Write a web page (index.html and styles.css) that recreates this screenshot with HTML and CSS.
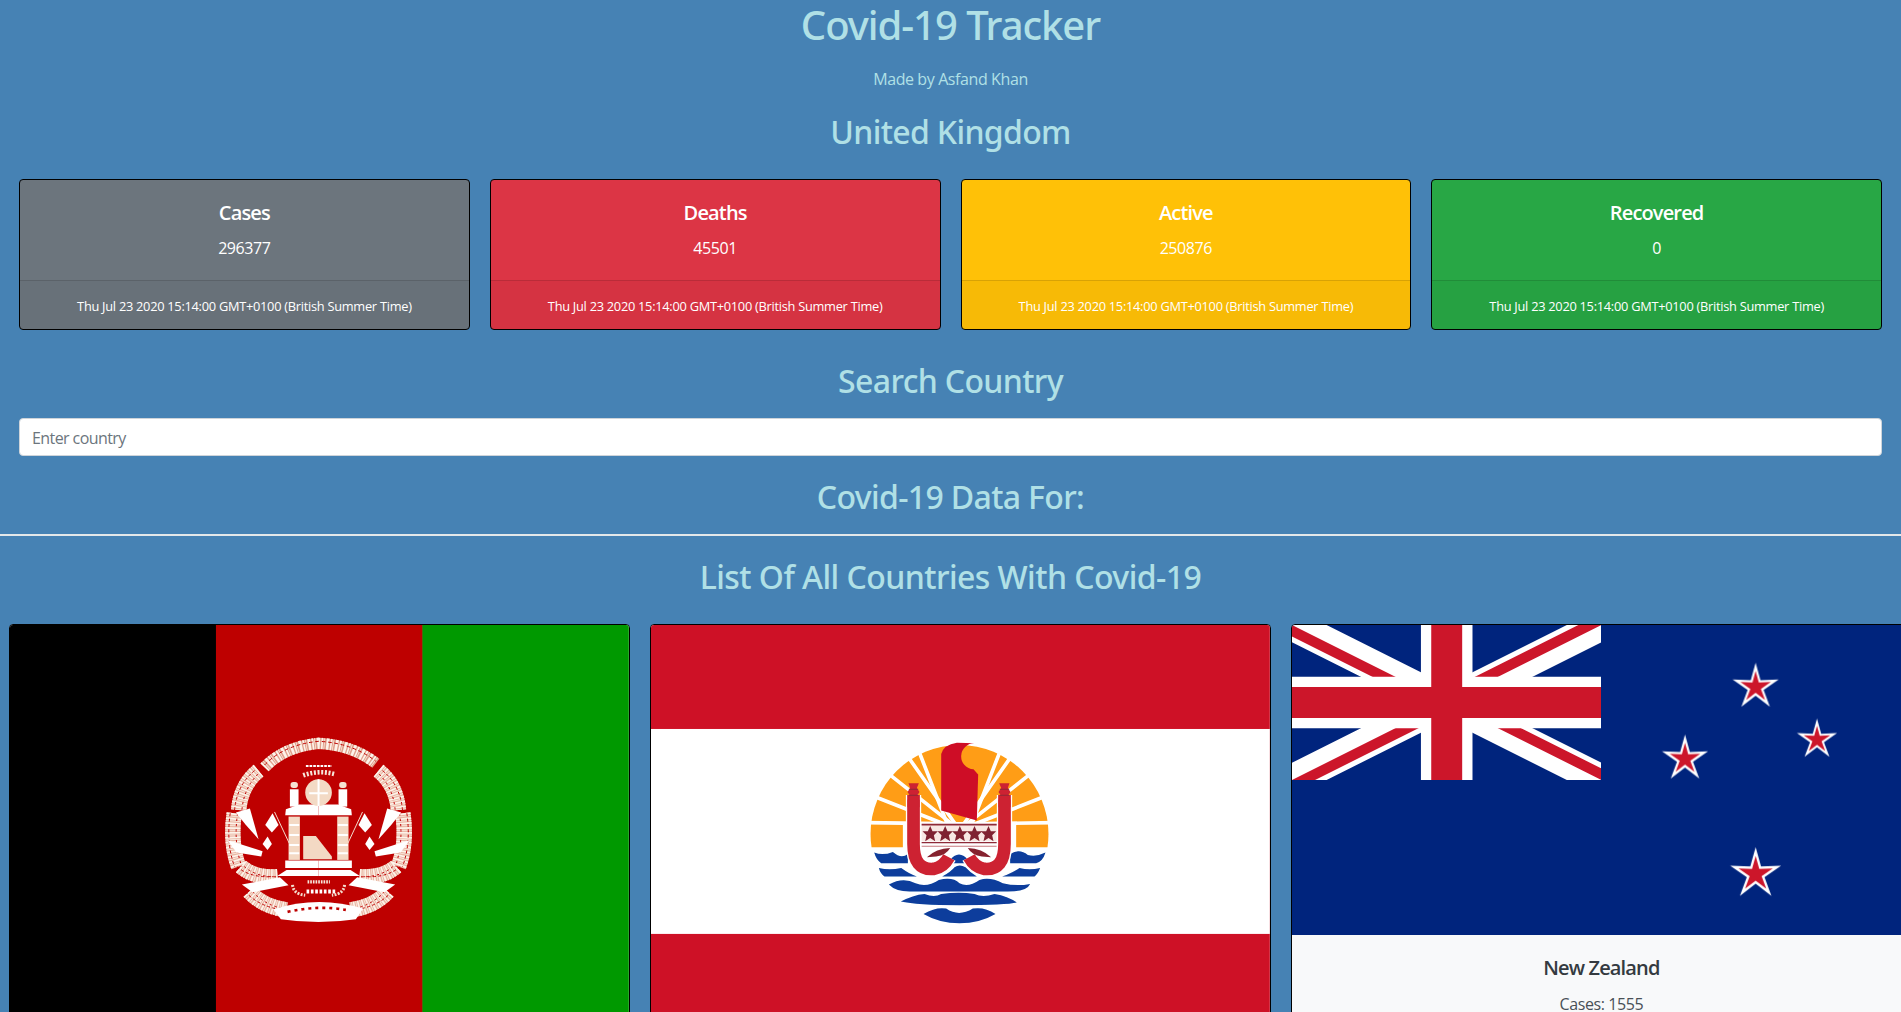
FILE: index.html
```html
<!DOCTYPE html>
<html lang="en">
<head>
  <meta charset="UTF-8">
  <meta name="viewport" content="width=device-width, initial-scale=1.0">
  <title>Covid-19 Tracker</title>
  <link rel="stylesheet" href="styles.css">
</head>
<body>

  <header class="page-head">
    <h1>Covid-19 Tracker</h1>
    <p class="byline">Made by Asfand Khan</p>
    <h2 class="home-country">United Kingdom</h2>
  </header>

  <section class="stats">
    <div class="stat stat-cases">
      <div class="stat-body">
        <h5>Cases</h5>
        <p>296377</p>
      </div>
      <div class="stat-footer">Thu Jul 23 2020 15:14:00 GMT+0100 (British Summer Time)</div>
    </div>
    <div class="stat stat-deaths">
      <div class="stat-body">
        <h5>Deaths</h5>
        <p>45501</p>
      </div>
      <div class="stat-footer">Thu Jul 23 2020 15:14:00 GMT+0100 (British Summer Time)</div>
    </div>
    <div class="stat stat-active">
      <div class="stat-body">
        <h5>Active</h5>
        <p>250876</p>
      </div>
      <div class="stat-footer">Thu Jul 23 2020 15:14:00 GMT+0100 (British Summer Time)</div>
    </div>
    <div class="stat stat-recovered">
      <div class="stat-body">
        <h5>Recovered</h5>
        <p>0</p>
      </div>
      <div class="stat-footer">Thu Jul 23 2020 15:14:00 GMT+0100 (British Summer Time)</div>
    </div>
  </section>

  <section class="search">
    <h2>Search Country</h2>
    <input type="text" class="search-input" placeholder="Enter country">
    <h2 class="search-result">Covid-19 Data For:</h2>
  </section>

  <hr class="divider">

  <h2 class="list-title">List Of All Countries With Covid-19</h2>

  <section class="countries">

    <!-- Afghanistan -->
    <div class="country">
      <svg class="flag" viewBox="0 0 619 413">
        <defs>
          <filter id="soft"><feGaussianBlur stdDeviation="1.5"/></filter>
          <path id="af-wreath" d="M178 182 Q125 225 118 300 M105 310 Q92 400 118 470 M125 470 Q165 505 235 500 M150 545 Q190 590 262 600" fill="none"/>
          <g id="af-half">
            <use href="#af-wreath" stroke="#e9b8a6" stroke-width="46"/>
            <use href="#af-wreath" stroke="#fdf3ea" stroke-width="46" stroke-dasharray="5 3 2 4"/>
            <use href="#af-wreath" x="-12" stroke="#be0000" stroke-width="3" stroke-dasharray="9 7"/>
            <use href="#af-wreath" x="10" stroke="#be0000" stroke-width="3" stroke-dasharray="7 9"/>
            <path d="M110 308 L152 296 L178 388 L140 345Z" fill="#fff"/>
            <path d="M84 390 L190 424 L186 440 L112 428Z" fill="#fff"/>
            <path d="M128 524 L242 502 L268 526 L160 547Z" fill="#fff"/>
            <path d="M226 306 L270 400" fill="none" stroke="#f4dccd" stroke-width="3"/>
            <path d="M220 310 L238 345 L218 368 L198 345Z" fill="#fff"/>
            <path d="M205 380 L218 402 L205 420 L190 402Z" fill="#fff"/>
            <rect x="272" y="238" width="26" height="52" fill="#fff"/>
            <rect x="274" y="216" width="22" height="18" rx="8" fill="#f6e2d3"/>
            <rect x="268" y="320" width="34" height="130" fill="#f3d9c4"/>
            <path d="M270 345 H300 M270 375 H300 M270 405 H300 M270 430 H300" stroke="#fff" stroke-width="6"/>
            <path d="M260 298 L300 284 L358 284 L358 316 L258 316Z" fill="#fff"/>
            <path d="M258 452 H358 V474 H258Z" fill="#fff"/>
            <path d="M234 498 L262 480 H358 V498Z" fill="#fff"/>
            <path d="M280 525 Q282 552 318 556" fill="none" stroke="#f4dccd" stroke-width="9" stroke-dasharray="6 4"/>
          </g>
        </defs>
        <rect width="206.5" height="413" fill="#000"/>
        <rect x="206" width="207" height="413" fill="#be0000"/>
        <rect x="412.5" width="206.5" height="413" fill="#090"/>
        <g transform="translate(189.3 85) scale(0.3333)" filter="url(#soft)">
          <path d="M196 172 Q255 110 358 100 Q460 105 530 160" fill="none" stroke="#e0a08c" stroke-width="34"/>
          <path d="M196 172 Q255 110 358 100 Q460 105 530 160" fill="none" stroke="#fdf3ea" stroke-width="34" stroke-dasharray="5 3 2 5 8 4"/>
          <path d="M196 165 Q255 104 358 94 Q460 99 530 154" fill="none" stroke="#be0000" stroke-width="3" stroke-dasharray="11 8"/>
          <path d="M312 196 Q358 180 405 192" fill="none" stroke="#f7e6da" stroke-width="14" stroke-dasharray="6 5"/>
          <path d="M320 168 H398" fill="none" stroke="#fff" stroke-width="6" stroke-dasharray="8 3"/>
          <use href="#af-half"/>
          <use href="#af-half" transform="translate(716 0) scale(-1 1)"/>
          <circle cx="358" cy="248" r="40" fill="#f3dac5"/>
          <path d="M358 208 V288 M330 250 H386" stroke="#fff" stroke-width="6"/>
          <path d="M306 450 V372 Q306 340 358 330 Q410 340 410 450Z" fill="#be0000"/>
          <path d="M312 448 V378 H350 L398 440 V448Z" fill="#f3d9c4"/>
          <path d="M322 545 H410" stroke="#fff" stroke-width="12" stroke-dasharray="8 5"/>
          <path d="M325 516 H392" stroke="#f7e6da" stroke-width="10" stroke-dasharray="5 3"/>
          <path d="M222 598 Q358 555 492 596 L470 628 Q358 645 245 628Z" fill="#fff"/>
          <path d="M265 606 Q358 585 440 600" fill="none" stroke="#be0000" stroke-width="8" stroke-dasharray="9 12"/>
        </g>
      </svg>
    </div>

    <!-- French Polynesia -->
    <div class="country">
      <svg class="flag" viewBox="0 0 619 413">
        <defs>
          <clipPath id="sun-clip"><rect x="80" y="50" width="560" height="332"/></clipPath>
          <polygon id="deck-star" points="0,-24 7,-8 23,-8 11,4 15,22 0,12 -15,22 -11,4 -23,-8 -7,-8" fill="#7f2231"/>
          <g id="hull">
            <path d="M222 225 L222 372 Q222 452 282 447 Q312 442 328 412" fill="none" stroke="#fff" stroke-width="46"/>
            <path d="M222 225 L222 372 Q222 452 282 447 Q312 442 328 412" fill="none" stroke="#cd2230" stroke-width="38"/>
            <path d="M207 190 H238 L232 204 L240 216 L232 228 L240 240 L240 262 H204 L204 240 L212 228 L204 216 L212 204Z" fill="#cd2230"/>
            <path d="M208 208 H236 M208 226 H236" stroke="#8e2a38" stroke-width="3"/>
            <path d="M262 412 Q290 385 332 384 Q320 405 290 410Z" fill="#85202f"/>
          </g>
        </defs>
        <rect width="619" height="413" fill="#ce1126"/>
        <rect y="104" width="619" height="205" fill="#fff"/>
        <g transform="translate(188.6 95) scale(0.3333)" filter="url(#soft)">
          <g clip-path="url(#sun-clip)">
            <circle cx="360" cy="342" r="267" fill="#ff9d12"/>
            <g stroke="#fff" stroke-width="11">
              <path d="M360 312 L60 308 M360 312 L660 308"/>
              <path d="M360 330 L80 220 M360 330 L640 220"/>
              <path d="M360 330 L120 140 M360 330 L600 140"/>
              <path d="M360 330 L170 60 M360 330 L550 60"/>
              <path d="M330 330 L225 60 M390 330 L495 60"/>
            </g>
          </g>
          <rect x="190" y="315" width="340" height="70" fill="#fff"/>
          <path d="M104 398 Q130 408 160 396 Q185 418 205 402 L205 430 H125 Q110 420 104 398Z" fill="#083d9c"/>
          <path d="M512 402 Q540 385 565 405 Q590 412 618 398 Q610 425 590 430 H512Z" fill="#083d9c"/>
          <path d="M330 422 Q358 385 388 422 V430 H330Z" fill="#083d9c"/>
          <path d="M118 444 Q150 452 185 444 Q210 462 232 470 H135 Q122 460 118 444Z" fill="#083d9c"/>
          <path d="M308 470 Q335 455 345 442 Q360 432 378 442 Q392 458 412 470Z" fill="#083d9c"/>
          <path d="M488 470 Q520 458 540 444 Q570 452 602 444 Q595 462 585 470Z" fill="#083d9c"/>
          <path d="M148 494 Q190 470 228 490 Q262 504 298 480 Q340 470 360 490 Q386 504 420 480 Q452 470 490 490 Q530 500 572 492 Q562 515 505 515 H210 Q168 515 148 494Z" fill="#083d9c"/>
          <path d="M184 545 Q220 525 255 522 Q285 535 305 522 Q360 515 405 522 Q430 535 465 522 Q505 528 532 548 Q500 556 360 556 Q230 556 184 545Z" fill="#083d9c"/>
          <path d="M252 582 Q290 560 320 566 Q358 592 400 566 Q435 560 468 582 Q420 610 360 610 Q300 610 252 582Z" fill="#083d9c"/>
          <rect x="246" y="312" width="226" height="52" fill="#f8e8e4"/>
          <path d="M246 314 H472" stroke="#8e2a38" stroke-width="5"/>
          <path d="M246 368 H472" stroke="#8e2a38" stroke-width="4"/>
          <path d="M246 379 H472" stroke="#c87a80" stroke-width="3"/>
          <use href="#deck-star" x="272" y="342"/>
          <use href="#deck-star" x="317" y="342"/>
          <use href="#deck-star" x="361" y="342"/>
          <use href="#deck-star" x="405" y="342"/>
          <use href="#deck-star" x="447" y="342"/>
          <path d="M305 102 Q312 74 352 68 L406 70 A38 38 0 0 0 402 148 L416 164 L412 302 L305 272Z" fill="#ce1126"/>
          <use href="#hull"/>
          <use href="#hull" transform="translate(717 0) scale(-1 1)"/>
        </g>
      </svg>
    </div>

    <!-- New Zealand -->
    <div class="country">
      <svg class="flag flag-nz" viewBox="0 0 1200 600" preserveAspectRatio="none">
        <defs>
          <filter id="soft-nz"><feGaussianBlur stdDeviation="1.2"/></filter>
          <clipPath id="uj-canton"><path d="M0 0 V30 H60 V0Z"/></clipPath>
          <clipPath id="uj-counter"><path d="M30 15 H60 V30Z V30 H0Z H0 V0Z V0 H60Z"/></clipPath>
          <polygon id="nz-star" points="0,-100 20,-28 95,-31 33,12 58.8,81 0,36 -58.8,81 -33,12 -95,-31 -20,-28"/>
        </defs>
        <rect width="1200" height="600" fill="#00247d"/>
        <g filter="url(#soft-nz)">
          <g transform="scale(10)" clip-path="url(#uj-canton)">
            <path d="M0 0 L60 30 M60 0 L0 30" stroke="#fff" stroke-width="6"/>
            <path d="M0 0 L60 30 M60 0 L0 30" clip-path="url(#uj-counter)" stroke="#cc142b" stroke-width="4"/>
            <path d="M30 0 V30 M0 15 H60" stroke="#fff" stroke-width="10"/>
            <path d="M30 0 V30 M0 15 H60" stroke="#cc142b" stroke-width="6"/>
          </g>
          <g fill="#fff">
            <use href="#nz-star" transform="translate(899 120) scale(0.47)"/>
            <use href="#nz-star" transform="translate(1018 222) scale(0.41)"/>
            <use href="#nz-star" transform="translate(762 259) scale(0.47)"/>
            <use href="#nz-star" transform="translate(899 482) scale(0.52)"/>
          </g>
          <g fill="#cc142b">
            <use href="#nz-star" transform="translate(899 120) scale(0.31)"/>
            <use href="#nz-star" transform="translate(1018 222) scale(0.27)"/>
            <use href="#nz-star" transform="translate(762 259) scale(0.31)"/>
            <use href="#nz-star" transform="translate(899 482) scale(0.35)"/>
          </g>
        </g>
      </svg>
      <div class="country-body">
        <h5>New Zealand</h5>
        <p>Cases: 1555</p>
      </div>
    </div>

  </section>

</body>
</html>
```

FILE: styles.css
```css
* {
  box-sizing: border-box;
}

html, body {
  margin: 0;
  height: 1012px;
  overflow: hidden;
}

body {
  font-family: "Open Sans", "Noto Sans", sans-serif;
  font-size: 16px;
  line-height: 24px;
  letter-spacing: -0.025em;
  background-color: #4682b4;
  color: #b0e0e6;
  text-align: center;
}

h1, h2, h5, p {
  margin: 0;
  font-weight: 500;
}

h1, h2 {
  font-family: "Noto Sans", "Open Sans", sans-serif;
}

h1 {
  font-size: 40px;
  line-height: 48px;
  letter-spacing: -1.05px;
  padding-top: 1px;
}

h2 {
  font-size: 32px;
  line-height: 38px;
  letter-spacing: -0.65px;
}

h5 {
  font-size: 20px;
  font-weight: 600;
  letter-spacing: -0.85px;
}

.byline {
  margin-top: 18px;
  font-weight: 400;
}

.home-country {
  margin-top: 22px;
}

/* top four totals */
.stats {
  display: grid;
  grid-template-columns: repeat(4, 1fr);
  gap: 20px;
  padding: 0 19px;
  margin-top: 28px;
}

.stat {
  height: 151px;
  border: 1px solid #000;
  border-radius: 4px;
  color: #fff;
  overflow: hidden;
}

.stat-body {
  height: 100px;
  padding: 21px 20px 20px;
}

.stat-body p {
  margin-top: 11px;
  font-weight: 400;
}

.stat-footer {
  padding: 13px 20px 11px;
  font-size: 12.8px;
  letter-spacing: -0.265px;
  background: rgba(0, 0, 0, 0.03);
  border-top: 1px solid rgba(0, 0, 0, 0.125);
}

.stat-cases { background-color: #6c757d; }
.stat-deaths { background-color: #dc3545; }
.stat-active { background-color: #ffc107; }
.stat-recovered { background-color: #28a745; }

.search {
  padding: 0 19px;
  margin-top: 32px;
}

.search-input {
  display: block;
  width: 100%;
  height: 38px;
  margin-top: 18px;
  padding: 7px 12px 5px;
  font: inherit;
  letter-spacing: -0.58px;
  color: #495057;
  background: #fff;
  border: 1px solid #ced4da;
  border-radius: 4px;
}

.search-input::placeholder {
  color: #6c757d;
}

.search-result {
  margin-top: 22px;
}

.divider {
  height: 2px;
  margin: 18px 0 0;
  border: 0;
  background: #e4e8ea;
}

.list-title {
  margin-top: 22px;
  letter-spacing: -0.55px;
}

/* flag cards run past the right edge, like the original */
.countries {
  display: grid;
  grid-template-columns: repeat(3, 620.85px);
  align-items: start;
  gap: 20px;
  padding-left: 9.3px;
  margin-top: 28px;
}

.country {
  border: 1px solid #000;
  border-radius: 4px;
  background: #f8f9fa;
  color: #343a40;
  overflow: hidden;
}

.flag {
  display: block;
  width: 100%;
}

.flag-nz {
  height: 310px;
}

.country-body {
  padding: 21px 20px 20px;
}

.country-body p {
  margin-top: 12px;
  font-weight: 400;
  color: #495057;
}
```
